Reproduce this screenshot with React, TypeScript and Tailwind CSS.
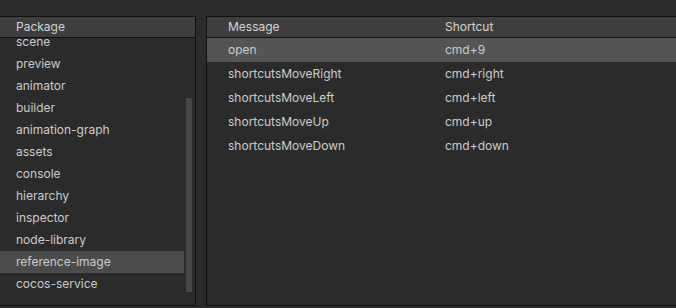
import React from "react";

const packages = [
  "scene",
  "preview",
  "animator",
  "builder",
  "animation-graph",
  "assets",
  "console",
  "hierarchy",
  "inspector",
  "node-library",
  "reference-image",
  "cocos-service",
];

const messages = [
  { name: "open", shortcut: "cmd+9" },
  { name: "shortcutsMoveRight", shortcut: "cmd+right" },
  { name: "shortcutsMoveLeft", shortcut: "cmd+left" },
  { name: "shortcutsMoveUp", shortcut: "cmd+up" },
  { name: "shortcutsMoveDown", shortcut: "cmd+down" },
];

export default function App() {
  const selectedPackage = "reference-image";
  const selectedMessage = "open";

  return (
    <div
      className="w-[676px] h-[308px] overflow-hidden bg-[#2b2b2b] text-[12px] text-[#cccccc] pt-4 pb-[2px] flex gap-[10px]"
      style={{ fontFamily: 'Inter, "Liberation Sans", Arial, sans-serif' }}
    >
      {/* Package list */}
      <div className="w-[196px] shrink-0 flex flex-col border-y border-r border-[#111111]">
        <div className="h-[21px] shrink-0 bg-[#3e3e3e] border-b border-[#111111] pl-4 flex items-center text-[#d4d4d4]">
          Package
        </div>
        <div className="flex-1 relative overflow-hidden">
          <div className="-mt-[7px] w-[184px]">
            {packages.map((p) => (
              <div
                key={p}
                className={`h-[22px] pl-4 flex items-center ${
                  p === selectedPackage ? "bg-[#4b4b4b]" : ""
                }`}
              >
                {p}
              </div>
            ))}
          </div>
          <div className="absolute left-[186px] top-[60px] w-[6px] h-[194px] bg-[#474747]" />
        </div>
      </div>

      {/* Messages table */}
      <div className="flex-1 -mr-2 flex flex-col border border-[#111111]">
        <div className="h-[21px] shrink-0 bg-[#3e3e3e] border-b border-[#111111] flex items-center text-[#d4d4d4]">
          <div className="w-[238px] pl-[21px]">Message</div>
          <div>Shortcut</div>
        </div>
        <div className="flex-1">
          {messages.map((m) => (
            <div
              key={m.name}
              className={`h-[24px] flex items-center ${
                m.name === selectedMessage ? "bg-[#545454]" : ""
              }`}
            >
              <div className="w-[238px] pl-[21px]">{m.name}</div>
              <div>{m.shortcut}</div>
            </div>
          ))}
        </div>
      </div>
    </div>
  );
}
